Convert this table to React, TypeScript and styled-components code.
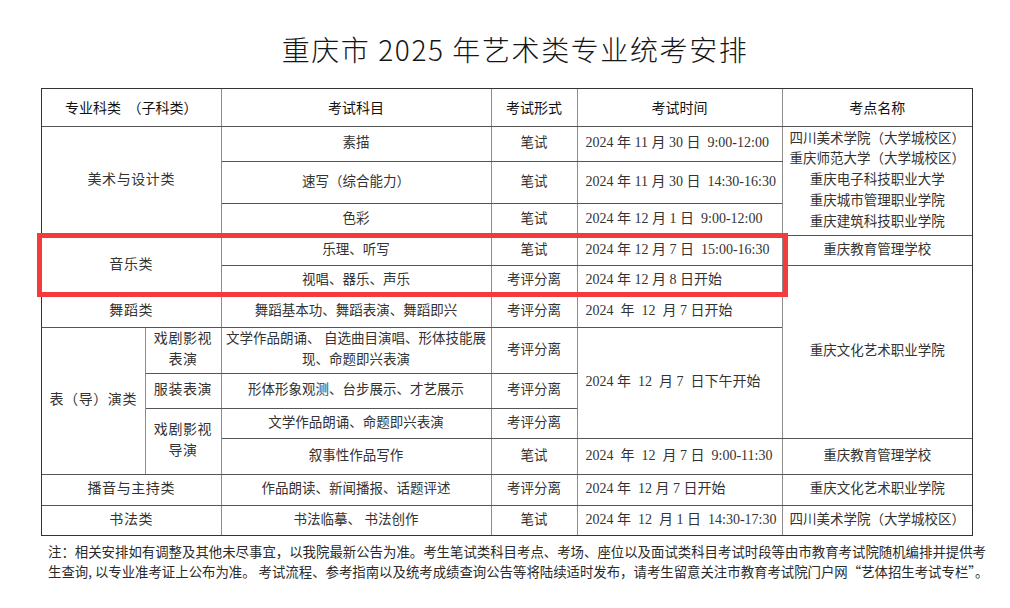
import React from 'react';
import styled, { createGlobalStyle } from 'styled-components';

const GlobalStyle = createGlobalStyle`
  body {
    margin: 0;
    background: #ffffff;
  }
`;

const Page = styled.div`
  position: relative;
  width: 1010px;
  height: 608px;
  padding-left: 41px;
  box-sizing: border-box;
  overflow: hidden;
`;

const Title = styled.h1`
  margin: 0;
  padding: 29px 0 19px 16px;
  width: 932px;
  box-sizing: border-box;
  text-align: center;
  font-family: "Noto Sans CJK SC", sans-serif;
  font-weight: 300;
  font-size: 28px;
  letter-spacing: 1.6px;
  line-height: 40px;
  color: #151515;
`;

const TableFrame = styled.div`
  width: 932px;
  border: 1px solid #333;
  box-sizing: border-box;
`;

const Table = styled.table`
  width: 930px;
  table-layout: fixed;
  border-collapse: collapse;
  border-style: hidden;
`;

const Row = styled.tr<{ $h: number }>`
  height: ${p => p.$h}px;
`;

const HeadCell = styled.th`
  padding: 0;
  border: 1px solid #555;
  border-left-color: #8c8c8c;
  border-right-color: #8c8c8c;
  font-family: "Noto Sans CJK SC", sans-serif;
  font-weight: 400;
  font-size: 14px;
  color: #111;
  text-align: center;
  white-space: pre;
`;

const Cell = styled.td<{ $left?: boolean; $wide?: boolean }>`
  padding: 0;
  border: 1px solid #555;
  border-left-color: #8c8c8c;
  border-right-color: #8c8c8c;
  font-family: "Liberation Serif", "Noto Sans CJK SC", serif;
  font-size: ${p => (p.$wide ? '14px' : '13.5px')};
  letter-spacing: ${p => (p.$wide ? '0.6px' : '0')};
  line-height: 20.7px;
  color: #333;
  text-align: ${p => (p.$left ? 'left' : 'center')};
  vertical-align: middle;
`;

const TimeCell = styled(Cell).attrs({ $left: true })`
  padding-left: 8px;
  white-space: pre;
  font-size: 14px;
`;

const Highlight = styled.div`
  position: absolute;
  left: 37px;
  top: 233px;
  width: 751px;
  height: 64px;
  border: 5px solid #f43a3c;
  box-sizing: border-box;
  pointer-events: none;
`;

const Note = styled.div`
  margin: 5px 0 0 7px;
  width: 938px;
  font-family: "Noto Sans CJK SC", sans-serif;
  font-size: 13.4px;
  line-height: 20px;
  color: #2a2a2a;
`;

const NoteLine = styled.div<{ $justify?: boolean }>`
  text-align: ${p => (p.$justify ? 'justify' : 'left')};
  text-align-last: ${p => (p.$justify ? 'justify' : 'left')};
  white-space: nowrap;
`;

export default function App() {
  return (
    <Page>
      <GlobalStyle />
      <Title>重庆市 2025 年艺术类专业统考安排</Title>
      <TableFrame>
        <Table>
          <colgroup>
            <col style={{ width: 103 }} />
            <col style={{ width: 76 }} />
            <col style={{ width: 270 }} />
            <col style={{ width: 86 }} />
            <col style={{ width: 205 }} />
            <col style={{ width: 190 }} />
          </colgroup>
          <tbody>
            <Row $h={37}>
              <HeadCell colSpan={2}>{'专业科类  （子科类）'}</HeadCell>
              <HeadCell>考试科目</HeadCell>
              <HeadCell>考试形式</HeadCell>
              <HeadCell>考试时间</HeadCell>
              <HeadCell>考点名称</HeadCell>
            </Row>

            <Row $h={35}>
              <Cell colSpan={2} rowSpan={3} $wide>美术与设计类</Cell>
              <Cell>素描</Cell>
              <Cell>笔试</Cell>
              <TimeCell>{'2024 年 11 月 30 日  9:00-12:00'}</TimeCell>
              <Cell rowSpan={3}>
                四川美术学院（大学城校区）<br />
                重庆师范大学（大学城校区）<br />
                重庆电子科技职业大学<br />
                重庆城市管理职业学院<br />
                重庆建筑科技职业学院
              </Cell>
            </Row>
            <Row $h={42}>
              <Cell>速写（综合能力）</Cell>
              <Cell>笔试</Cell>
              <TimeCell>{'2024 年 11 月 30 日  14:30-16:30'}</TimeCell>
            </Row>
            <Row $h={32}>
              <Cell>色彩</Cell>
              <Cell>笔试</Cell>
              <TimeCell>{'2024 年 12 月 1 日  9:00-12:00'}</TimeCell>
            </Row>

            <Row $h={30}>
              <Cell colSpan={2} rowSpan={2} $wide>音乐类</Cell>
              <Cell>乐理、听写</Cell>
              <Cell>笔试</Cell>
              <TimeCell>{'2024 年 12 月 7 日  15:00-16:30'}</TimeCell>
              <Cell>重庆教育管理学校</Cell>
            </Row>
            <Row $h={30}>
              <Cell>视唱、器乐、声乐</Cell>
              <Cell>考评分离</Cell>
              <TimeCell>{'2024 年 12 月 8 日开始'}</TimeCell>
              <Cell rowSpan={5}>重庆文化艺术职业学院</Cell>
            </Row>

            <Row $h={32}>
              <Cell colSpan={2} $wide>舞蹈类</Cell>
              <Cell>舞蹈基本功、舞蹈表演、舞蹈即兴</Cell>
              <Cell>考评分离</Cell>
              <TimeCell>{'2024  年  12  月 7 日开始'}</TimeCell>
            </Row>

            <Row $h={46}>
              <Cell rowSpan={4} $wide>表（导）演类</Cell>
              <Cell $wide>戏剧影视<br />表演</Cell>
              <Cell>
                文学作品朗诵、 自选曲目演唱、形体技能展<br />
                现、命题即兴表演
              </Cell>
              <Cell>考评分离</Cell>
              <TimeCell rowSpan={3}>{'2024 年  12  月 7  日下午开始'}</TimeCell>
            </Row>
            <Row $h={35}>
              <Cell $wide>服装表演</Cell>
              <Cell>形体形象观测、台步展示、才艺展示</Cell>
              <Cell>考评分离</Cell>
            </Row>
            <Row $h={30}>
              <Cell rowSpan={2} $wide>戏剧影视<br />导演</Cell>
              <Cell>文学作品朗诵、命题即兴表演</Cell>
              <Cell>考评分离</Cell>
            </Row>
            <Row $h={36}>
              <Cell>叙事性作品写作</Cell>
              <Cell>笔试</Cell>
              <TimeCell>{'2024  年  12  月 7 日  9:00-11:30'}</TimeCell>
              <Cell>重庆教育管理学校</Cell>
            </Row>

            <Row $h={31}>
              <Cell colSpan={2} $wide>播音与主持类</Cell>
              <Cell>作品朗读、新闻播报、话题评述</Cell>
              <Cell>考评分离</Cell>
              <TimeCell>{'2024 年  12 月 7 日开始'}</TimeCell>
              <Cell>重庆文化艺术职业学院</Cell>
            </Row>
            <Row $h={30}>
              <Cell colSpan={2} $wide>书法类</Cell>
              <Cell>书法临摹、 书法创作</Cell>
              <Cell>笔试</Cell>
              <TimeCell>{'2024 年  12  月 1 日  14:30-17:30'}</TimeCell>
              <Cell>四川美术学院（大学城校区）</Cell>
            </Row>
          </tbody>
        </Table>
      </TableFrame>
      <Note>
        <NoteLine $justify>
          注：相关安排如有调整及其他未尽事宜，以我院最新公告为准。考生笔试类科目考点、考场、座位以及面试类科目考试时段等由市教育考试院随机编排并提供考
        </NoteLine>
        <NoteLine>
          生查询, 以专业准考证上公布为准。 考试流程、参考指南以及统考成绩查询公告等将陆续适时发布，请考生留意关注市教育考试院门户网“艺体招生考试专栏”。
        </NoteLine>
      </Note>
      <Highlight />
    </Page>
  );
}
